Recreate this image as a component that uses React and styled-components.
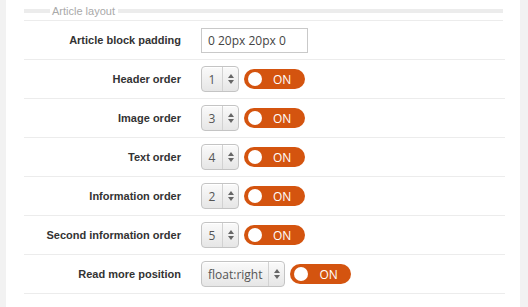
import React from 'react';
import styled, { createGlobalStyle } from 'styled-components';

const Global = createGlobalStyle`
	html, body {
		margin: 0;
		padding: 0;
		background: #f2f2f2;
	}
	body {
		font-family: "Liberation Sans", Arial, sans-serif;
	}
`;

const Page = styled.div`
	width: 528px;
	height: 307px;
	display: flex;
	overflow: hidden;
`;

const Panel = styled.div`
	width: 514px;
	margin-left: 6px;
	background: #fff;
	padding: 0 15px 0 18px;
	box-sizing: border-box;
`;

const Legend = styled.div`
	display: flex;
	align-items: center;
	height: 21px;
	padding-top: 2px;
	box-sizing: border-box;
	font-size: 11px;
	color: #a9a9a9;
	border-bottom: 1px solid #ececec;
	margin-right: 2px;
`;

const LegendBar = styled.div`
	height: 4px;
	background: #ececec;
	width: ${props => props.width || 'auto'};
	flex-grow: ${props => (props.grow ? 1 : 0)};
`;

const LegendText = styled.span`
	padding: 0 3px 0 2px;
`;

const Row = styled.div`
	display: flex;
	align-items: center;
	height: 39px;
	border-bottom: 1px solid #ececec;
	box-sizing: border-box;
`;

const Label = styled.div`
	width: 157px;
	text-align: right;
	font-size: 11px;
	font-weight: bold;
	color: #333;
	padding-right: 20px;
	box-sizing: content-box;
`;

const Controls = styled.div`
	display: flex;
	align-items: center;
	gap: 5px;
`;

const TextInput = styled.div`
	width: 107px;
	height: 25px;
	border: 1px solid #c9c9c9;
	box-sizing: border-box;
	font-size: 12px;
	color: #444;
	display: flex;
	align-items: center;
	padding-left: 6px;
	font-family: "Open Sans", "DejaVu Sans", sans-serif;
`;

const Select = styled.div`
	display: flex;
	height: 26px;
	border: 1px solid #c4c4c4;
	border-radius: 4px;
	box-sizing: border-box;
	background: linear-gradient(#fafafa, #e6e6e6);
	box-shadow: inset 0 1px 0 #fff;
	font-family: "Open Sans", "DejaVu Sans", sans-serif;
	font-size: 12px;
	color: #555;
`;

const SelectValue = styled.div`
	display: flex;
	align-items: center;
	justify-content: center;
	padding: 0 ${props => (props.wide ? '6px' : '5px')};
	min-width: 10px;
	border-right: 1px solid #d2d2d2;
`;

const Arrows = styled.div`
	width: 15px;
	display: flex;
	align-items: center;
	justify-content: center;
`;

const Toggle = styled.div`
	width: 61px;
	height: 20px;
	border-radius: 10px;
	background: #d4540f;
	display: flex;
	align-items: center;
	padding-left: 4px;
	box-sizing: border-box;
	gap: 11px;
	font-size: 12px;
	color: #fff;
	font-family: "Open Sans", "DejaVu Sans", sans-serif;
`;

const Knob = styled.div`
	width: 14px;
	height: 14px;
	border-radius: 50%;
	background: #fff;
`;

const ArrowIcon = () => (
	<svg width="6" height="10" viewBox="0 0 6 10">
		<path d="M0 4 L3 0 L6 4 Z M0 6 L3 10 L6 6 Z" fill="#666" />
	</svg>
);

const Switch = () => (
	<Toggle>
		<Knob />
		<span>ON</span>
	</Toggle>
);

const OrderSelect = ({ value, wide }) => (
	<Select>
		<SelectValue wide={wide}>{value}</SelectValue>
		<Arrows>
			<ArrowIcon />
		</Arrows>
	</Select>
);

const orders = [
	['Header order', 1],
	['Image order', 3],
	['Text order', 4],
	['Information order', 2],
	['Second information order', 5]
];

const App = () => (
	<Page>
		<Global />
		<Panel>
			<Legend>
				<LegendBar width="26px" />
				<LegendText>Article layout</LegendText>
				<LegendBar grow />
			</Legend>
			<Row>
				<Label>Article block padding</Label>
				<TextInput>0 20px 20px 0</TextInput>
			</Row>
			{orders.map(([label, value]) => (
				<Row key={label}>
					<Label>{label}</Label>
					<Controls>
						<OrderSelect value={value} />
						<Switch />
					</Controls>
				</Row>
			))}
			<Row>
				<Label>Read more position</Label>
				<Controls>
					<OrderSelect value="float:right" wide />
					<Switch />
				</Controls>
			</Row>
		</Panel>
	</Page>
);

export default App;
